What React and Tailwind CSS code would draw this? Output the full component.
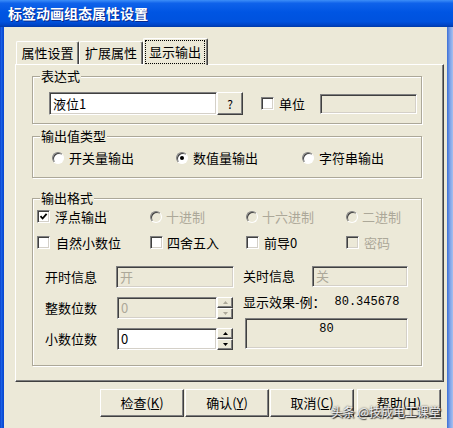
import React from "react";

function Check({ checked = false, disabled = false }) {
  return (
    <span
      className={
        "shrink-0 w-[13px] h-[13px] flex items-center justify-center border border-[#808080] border-r-white border-b-white shadow-[inset_1px_1px_0_#404040,inset_-1px_-1px_0_#d4d0c8] " +
        (disabled ? "bg-[#ece9d8]" : "bg-white")
      }
    >
      {checked && (
        <svg width="9" height="9" viewBox="0 0 9 9">
          <polyline points="1.5,4.2 3.6,6.5 7.6,1.8" fill="none" stroke="#000" strokeWidth="1.8" />
        </svg>
      )}
    </span>
  );
}

function Radio({ checked = false, disabled = false }) {
  return (
    <span
      className={
        "shrink-0 w-[12px] h-[12px] rounded-full flex items-center justify-center border border-[#808080] border-r-white border-b-white shadow-[inset_1px_1px_0_#404040] " +
        (disabled ? "bg-[#ece9d8]" : "bg-white")
      }
    >
      {checked && <span className="w-[4px] h-[4px] rounded-full bg-black" />}
    </span>
  );
}

function Group({ label, className, children }) {
  return (
    <div
      className={
        "relative w-[390px] border border-[#aca899] shadow-[1px_1px_0_#fff,inset_1px_1px_0_#fff] " + className
      }
    >
      <span className="absolute left-[7px] -top-[9px] leading-[16px] px-[1px] bg-[#ece9d8]">{label}</span>
      {children}
    </div>
  );
}

const sunken =
  "border border-[#808080] border-r-white border-b-white shadow-[inset_1px_1px_0_#404040,inset_-1px_-1px_0_#d4d0c8]";
const raised =
  "border border-white border-r-[#404040] border-b-[#404040] shadow-[inset_-1px_-1px_0_#808080]";

function Spin({ value, disabled }) {
  return (
    <div className="flex h-[22px]">
      <div
        className={
          "w-[100px] h-full flex items-center pl-[3px] " +
          sunken +
          (disabled ? " bg-[#ece9d8] text-[#aca899]" : " bg-white text-black")
        }
      >
        {value}
      </div>
      <div className="w-[16px] h-full flex flex-col">
        {[0, 1].map((i) => (
          <div key={i} className={"flex-1 flex items-center justify-center bg-[#ece9d8] " + raised}>
            <svg width="5" height="3" viewBox="0 0 5 3">
              <polygon
                points={i === 0 ? "2.5,0 5,3 0,3" : "0,0 5,0 2.5,3"}
                fill={disabled ? "#aca899" : "#000"}
              />
            </svg>
          </div>
        ))}
      </div>
    </div>
  );
}

function Btn({ children, className = "" }) {
  return (
    <div className={"w-[84px] h-[28px] flex items-center justify-center bg-[#ece9d8] " + raised + " " + className}>
      {children}
    </div>
  );
}

export default function App() {
  return (
    <div className="relative w-[453px] h-[428px] overflow-hidden flex flex-col bg-[#ece9d8] text-[13px] leading-[16px] text-black font-['Noto_Sans_CJK_SC',sans-serif]">
      <div className="h-[27px] shrink-0 flex items-center pl-[8px] pb-[1px] text-white font-bold text-[14px] [text-shadow:1px_1px_0_#0a2a8a] bg-[linear-gradient(to_bottom,#3d8ef8_0%,#0f62ea_12%,#0055e3_45%,#0052de_80%,#0045c8_92%,#003aa8_100%)]">
        标签动画组态属性设置
      </div>
      <div className="flex flex-1">
        <div className="w-[4px] bg-[linear-gradient(to_right,#0a3fc8,#1c63e6,#0b4fd8,#0847d0)]" />
        <div className="flex-1 flex flex-col pt-[11px] pl-[11px]">
          <div className="flex items-end h-[26px] pl-[1px]">
            <div className={"w-[63px] h-[23px] flex items-center justify-center rounded-t-[2px] border-t border-l border-white border-r border-r-[#404040] shadow-[inset_-1px_0_0_#808080]"}>
              属性设置
            </div>
            <div className={"w-[64px] h-[23px] flex items-center justify-center rounded-t-[2px] border-t border-l border-white border-r border-r-[#404040] shadow-[inset_-1px_0_0_#808080]"}>
              扩展属性
            </div>
            <div className="relative z-10 -mb-[1px] w-[65px] h-[27px] flex bg-[#ece9d8] rounded-t-[2px] border-t border-l border-white border-r border-r-[#404040] shadow-[inset_-1px_0_0_#808080]">
              <div className="flex-1 mt-[1px] ml-[1px] mr-[2px] mb-[1px] border border-dotted border-black flex items-center justify-center">
                显示输出
              </div>
            </div>
          </div>
          <div className="w-[429px] h-[318px] border border-white border-r-[#404040] border-b-[#404040] shadow-[inset_-1px_-1px_0_#808080] pl-[16px] pt-[11px] flex flex-col">
            <Group label="表达式" className="h-[48px] pt-[15px] pl-[16px]">
              <div className="flex items-center">
                <div className={"w-[168px] h-[23px] bg-white flex items-center pl-[3px] " + sunken}>液位1</div>
                <div className={"w-[26px] h-[23px] flex items-center justify-center text-[12px] " + raised}>?</div>
                <div className="ml-[18px]">
                  <Check />
                </div>
                <span className="ml-[5px]">单位</span>
                <div className={"ml-[15px] w-[97px] h-[20px] bg-[#ece9d8] " + sunken} />
              </div>
            </Group>
            <Group label="输出值类型" className="mt-[12px] h-[42px] pt-[14px] pl-[19px]">
              <div className="flex items-center h-[13px]">
                <div className="w-[124px] flex items-center gap-[5px]">
                  <Radio />
                  <span>开关量输出</span>
                </div>
                <div className="w-[126px] flex items-center gap-[5px]">
                  <Radio checked />
                  <span>数值量输出</span>
                </div>
                <div className="flex items-center gap-[5px]">
                  <Radio />
                  <span>字符串输出</span>
                </div>
              </div>
            </Group>
            <Group label="输出格式" className="mt-[20px] h-[168px] pt-[11px] pl-[4px]">
              <div className="flex items-center h-[13px]">
                <div className="w-[113px] flex items-center gap-[5px]">
                  <Check checked />
                  <span>浮点输出</span>
                </div>
                <div className="w-[96px] flex items-center gap-[4px] text-[#aca899]">
                  <Radio disabled />
                  <span>十进制</span>
                </div>
                <div className="w-[100px] flex items-center gap-[4px] text-[#aca899]">
                  <Radio disabled />
                  <span>十六进制</span>
                </div>
                <div className="flex items-center gap-[4px] text-[#aca899]">
                  <Radio disabled />
                  <span>二进制</span>
                </div>
              </div>
              <div className="flex items-center h-[13px] mt-[13px]">
                <div className="w-[113px] flex items-center gap-[6px]">
                  <Check />
                  <span>自然小数位</span>
                </div>
                <div className="w-[96px] flex items-center gap-[4px]">
                  <Check />
                  <span>四舍五入</span>
                </div>
                <div className="w-[100px] flex items-center gap-[5px]">
                  <Check />
                  <span>前导0</span>
                </div>
                <div className="flex items-center gap-[5px] text-[#aca899]">
                  <Check disabled />
                  <span>密码</span>
                </div>
              </div>
              <div className="flex mt-[17px] pl-[8px]">
                <div className="w-[198px] flex flex-col">
                  <div className="flex items-center h-[22px]">
                    <span className="w-[71px]">开时信息</span>
                    <div className={"w-[118px] h-[22px] bg-[#ece9d8] text-[#aca899] flex items-center pl-[3px] " + sunken}>开</div>
                  </div>
                  <div className="flex items-center h-[22px] mt-[9px]">
                    <span className="w-[72px]">整数位数</span>
                    <Spin value="0" disabled />
                  </div>
                  <div className="flex items-center h-[23px] mt-[8px]">
                    <span className="w-[72px]">小数位数</span>
                    <Spin value="0" />
                  </div>
                </div>
                <div className="flex flex-col">
                  <div className="flex items-center h-[22px] -mt-[1px]">
                    <span className="w-[69px]">关时信息</span>
                    <div className={"w-[96px] h-[21px] bg-[#ece9d8] text-[#aca899] flex items-center pl-[3px] " + sunken}>关</div>
                  </div>
                  <div className="flex items-center mt-[8px] h-[14px]">
                    <span>显示效果-例：</span>
                    <span className="ml-[9px] font-['Liberation_Mono',monospace] text-[12px]">80.345678</span>
                  </div>
                  <div className={"ml-[2px] mt-[9px] w-[163px] h-[31px] flex justify-center pt-[2px] font-['Liberation_Mono',monospace] text-[12px] " + sunken}>
                    80
                  </div>
                </div>
              </div>
            </Group>
          </div>
          <div className="flex mt-[7px] pl-[85px] gap-[1px]">
            <Btn>
              检查(<u>K</u>)
            </Btn>
            <Btn>
              确认(<u>Y</u>)
            </Btn>
            <Btn>
              取消(<u>C</u>)
            </Btn>
            <Btn className="ml-[2px]">
              帮助(<u>H</u>)
            </Btn>
          </div>
        </div>
        <div className="w-[6px] bg-[linear-gradient(to_right,#3b6fd6,#7da2e8,#a8c0ee)]" />
      </div>
      <div className="absolute right-[12px] bottom-[9px] text-[12px] leading-[14px] text-white/90 [text-shadow:0_0_2px_#333,1px_1px_1px_#222]">
        头条 @技成电工课堂
      </div>
    </div>
  );
}
